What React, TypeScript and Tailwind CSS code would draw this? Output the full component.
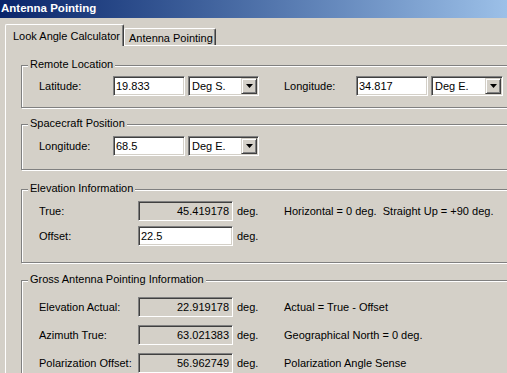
import type { ReactNode } from 'react';

const sunken =
  'border border-t-[#808080] border-l-[#808080] border-b-white border-r-white shadow-[inset_1px_1px_0_#404040,inset_-1px_-1px_0_#d4d0c8]';

function Field({ value, width, readOnly }: { value: string; width: string; readOnly?: boolean }) {
  return (
    <div
      className={`${sunken} ${width} flex h-[20px] shrink-0 items-center ${
        readOnly ? 'justify-end bg-[#d4d0c8] pr-[3px]' : 'bg-white pl-[2px]'
      }`}
    >
      {value}
    </div>
  );
}

function Combo({ value, width }: { value: string; width: string }) {
  return (
    <div className={`${sunken} ${width} flex h-[20px] shrink-0 items-center bg-white p-[1px]`}>
      <span className="pl-[2px]">{value}</span>
      <div className="ml-auto flex h-[16px] w-[16px] items-center justify-center border border-t-[#d4d0c8] border-l-[#d4d0c8] border-b-[#404040] border-r-[#404040] bg-[#d4d0c8] shadow-[inset_1px_1px_0_#fff,inset_-1px_-1px_0_#808080]">
        <svg width="7" height="4" viewBox="0 0 7 4">
          <polygon points="0,0 7,0 3.5,4" fill="#000" />
        </svg>
      </div>
    </div>
  );
}

function Group({ title, className, children }: { title: string; className: string; children: ReactNode }) {
  return (
    <div
      className={`relative mr-[20px] border border-[#808080] pl-[17px] shadow-[inset_1px_1px_0_#fff,1px_1px_0_#fff] ${className}`}
    >
      <span className="absolute left-[6px] top-[-8px] bg-[#d4d0c8] px-[2px] leading-[13px]">{title}</span>
      {children}
    </div>
  );
}

function InfoRow({ label, value, note, readOnly }: { label: string; value: string; note?: string; readOnly?: boolean }) {
  return (
    <div className="flex h-[20px] items-center">
      <span className="w-[99px] shrink-0">{label}</span>
      <Field value={value} width="w-[95px]" readOnly={readOnly} />
      <span className="ml-[4px] w-[47px] shrink-0">deg.</span>
      {note && <span className="whitespace-pre">{note}</span>}
    </div>
  );
}

export default function App() {
  return (
    <div className="h-[373px] w-[507px] overflow-hidden bg-[#d4d0c8] font-['Liberation_Sans',Arial,sans-serif] text-[11px] text-black">
      <div className="flex h-[18px] items-center bg-gradient-to-r from-[#0a246a] to-[#9cc0e8] pl-[1px] text-[11.5px] font-bold text-white">
        Antenna Pointing
      </div>

      <div className="w-[540px]">
        <div className="relative z-10 flex h-[27px] items-end pl-[5px]">
          <div className="-mb-px flex h-[22px] w-[119px] items-start rounded-t-[2px] border-l border-t border-r border-l-white border-t-white border-r-[#404040] bg-[#d4d0c8] pl-[7px] pt-[3px] shadow-[inset_-1px_0_0_#808080]">
            Look Angle Calculator
          </div>
          <div className="flex h-[17px] w-[92px] items-start rounded-t-[2px] border-l border-t border-r border-l-white border-t-white border-r-[#404040] pl-[4px] pt-[1px] shadow-[inset_-1px_0_0_#808080]">
            Antenna Pointing
          </div>
        </div>

        <div className="ml-[5px] h-[400px] border-l border-t border-white pl-[15px] pt-[19px]">
          <Group title="Remote Location" className="pt-[10px] pb-[11px]">
            <div className="flex h-[20px] items-center">
              <span className="w-[74px] shrink-0">Latitude:</span>
              <Field value="19.833" width="w-[72px]" />
              <div className="ml-[3px]">
                <Combo value="Deg S." width="w-[71px]" />
              </div>
              <span className="ml-[25px] w-[72px] shrink-0">Longitude:</span>
              <Field value="34.817" width="w-[72px]" />
              <div className="ml-[3px]">
                <Combo value="Deg E." width="w-[72px]" />
              </div>
            </div>
          </Group>

          <Group title="Spacecraft Position" className="mt-[16px] pt-[11px] pb-[13px]">
            <div className="flex h-[20px] items-center">
              <span className="w-[74px] shrink-0">Longitude:</span>
              <Field value="68.5" width="w-[72px]" />
              <div className="ml-[3px]">
                <Combo value="Deg E." width="w-[71px]" />
              </div>
            </div>
          </Group>

          <Group title="Elevation Information" className="mt-[19px] flex flex-col gap-[5px] pt-[11px] pb-[16px]">
            <InfoRow label="True:" value="45.419178" readOnly note="Horizontal = 0 deg.  Straight Up = +90 deg." />
            <InfoRow label="Offset:" value="22.5" />
          </Group>

          <Group title="Gross Antenna Pointing Information" className="mt-[17px] flex flex-col gap-[8px] pt-[16px] pb-[16px]">
            <InfoRow label="Elevation Actual:" value="22.919178" readOnly note="Actual = True - Offset" />
            <InfoRow label="Azimuth True:" value="63.021383" readOnly note="Geographical North = 0 deg." />
            <InfoRow label="Polarization Offset:" value="56.962749" readOnly note="Polarization Angle Sense" />
          </Group>
        </div>
      </div>
    </div>
  );
}
